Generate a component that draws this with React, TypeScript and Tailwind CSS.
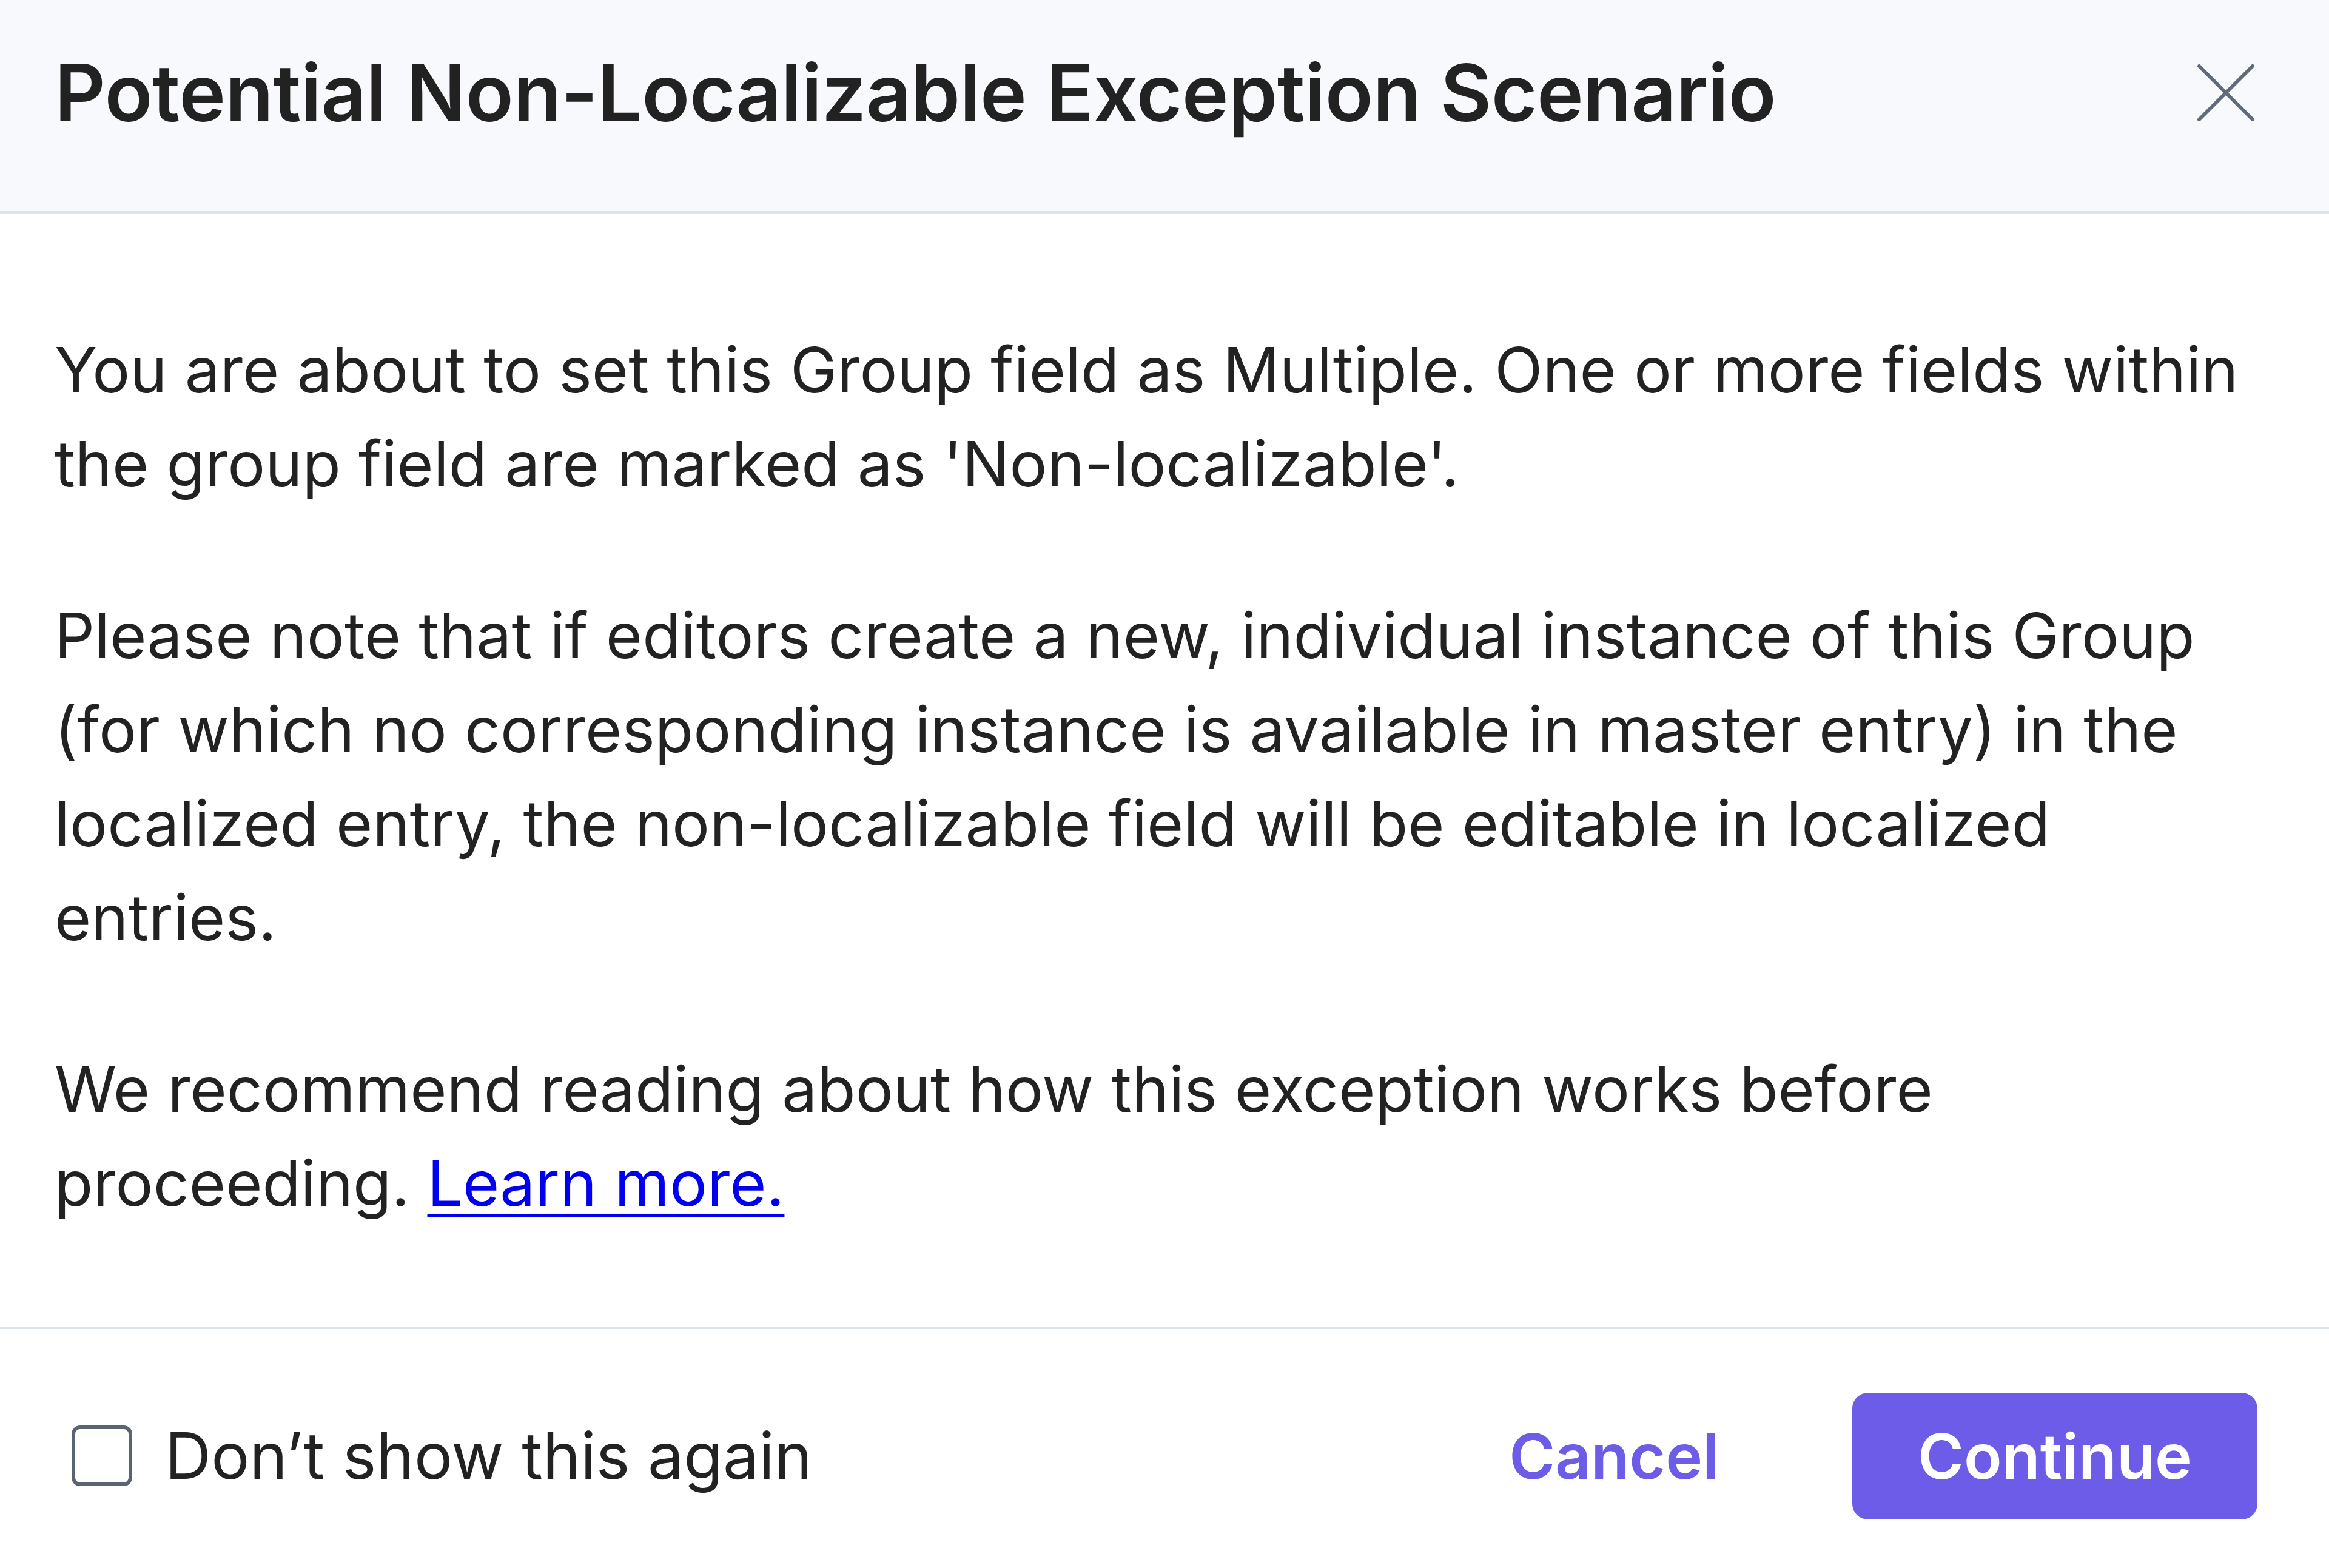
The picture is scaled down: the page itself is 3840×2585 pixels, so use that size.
const paragraphs = [
  "You are about to set this Group field as Multiple. One or more fields within the group field are marked as 'Non-localizable'.",
  "Please note that if editors create a new, individual instance of this Group (for which no corresponding instance is available in master entry) in the localized entry, the non-localizable field will be editable in localized entries.",
];

const CloseIcon = () => (
  <svg width="100" height="100" viewBox="0 0 100 100" fill="none">
    <path d="M6 6 L94 94 M94 6 L6 94" stroke="#5f6b7a" strokeWidth="6" strokeLinecap="round" />
  </svg>
);

export default function App() {
  return (
    <div className="w-[3840px] h-[2585px] bg-white flex flex-col font-['Inter','Noto_Sans',sans-serif] text-[#222222]">
      <div className="h-[352px] shrink-0 flex items-center justify-between pl-[90px] pr-[120px] pb-[42px] bg-[#f7f9fc] border-b-[4px] border-[#dde3ee]">
        <h1 className="text-[130px] font-semibold leading-none tracking-[-0.5px]">
          Potential Non-Localizable Exception Scenario
        </h1>
        <button className="w-[100px] h-[100px] flex items-center justify-center">
          <CloseIcon />
        </button>
      </div>

      <div className="flex-1 px-[90px] pt-[180px] pb-[154px] text-[103.5px] leading-[155px]">
        {paragraphs.map((p, i) => (
          <p key={i} className="mb-[128px]">
            {p}
          </p>
        ))}
        <p>
          We recommend reading about how this exception works before proceeding.{" "}
          <a href="#" className="text-[#0000ee] underline underline-offset-[14px] decoration-[5px]">
            Learn more.
          </a>
        </p>
      </div>

      <div className="h-[398px] shrink-0 border-t-[4px] border-[#dde3ee] flex items-center justify-between pl-[118px] pr-[118px] pt-[24px]">
        <label className="flex items-center gap-[54px] text-[105.5px]">
          <span className="w-[100px] h-[100px] rounded-[14px] border-[6px] border-[#5b6472] bg-white" />
          Don’t show this again
        </label>
        <div className="flex items-center gap-[220px]">
          <button className="text-[103px] font-semibold text-[#6c5ce7] leading-none">Cancel</button>
          <button className="h-[209px] px-[108px] rounded-[26px] bg-[#6c5ce7] text-white text-[103px] font-semibold leading-none">
            Continue
          </button>
        </div>
      </div>
    </div>
  );
}
